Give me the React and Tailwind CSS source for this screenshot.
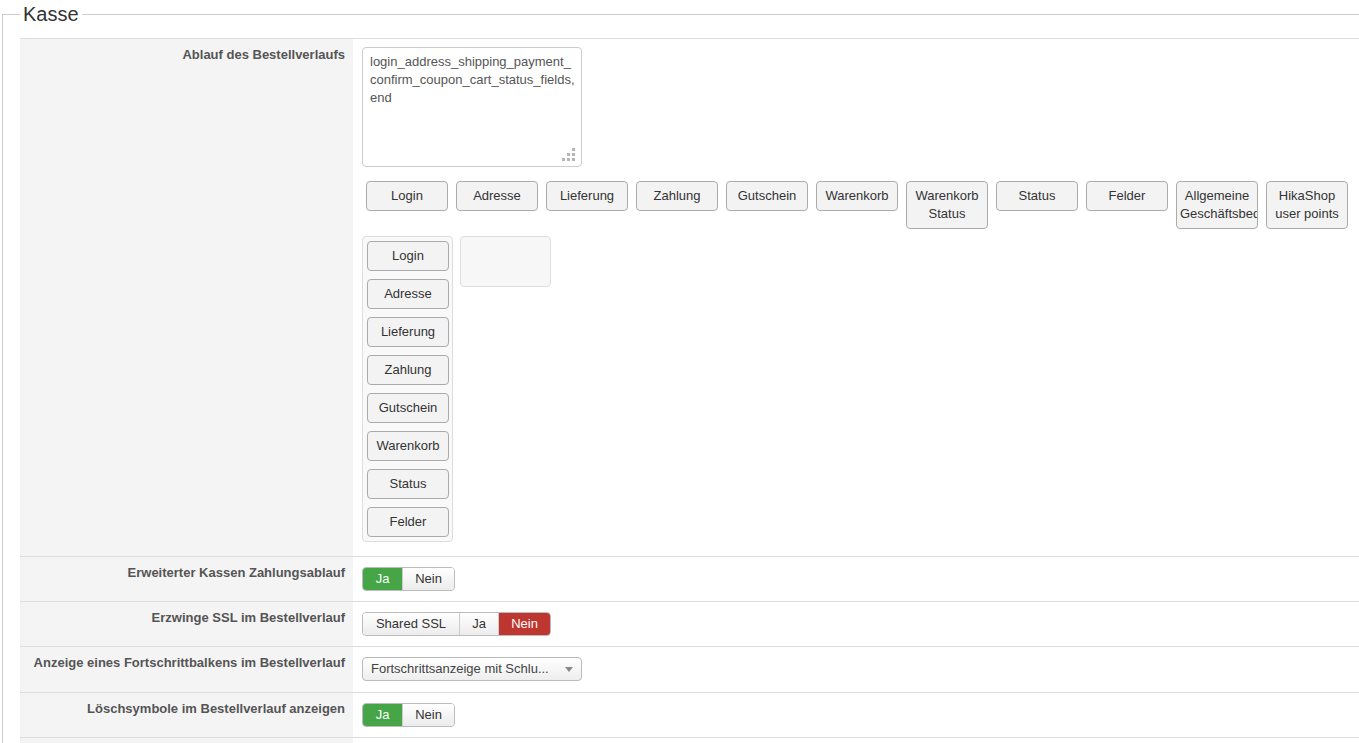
import React from "react";

const steps = ["Login", "Adresse", "Lieferung", "Zahlung", "Gutschein", "Warenkorb", "Warenkorb Status", "Status", "Felder", "Allgemeine Geschäftsbedingungen", "HikaShop user points"];
const chosen = ["Login", "Adresse", "Lieferung", "Zahlung", "Gutschein", "Warenkorb", "Status", "Felder"];

const StepButton = ({ label }) => (
  <div className="w-[82px] shrink-0 overflow-hidden rounded-[4px] border border-[#aaa] bg-[#f3f3f3] px-[3px] py-[5px] text-center text-[13px] leading-[18px] text-[#333]">
    {label}
  </div>
);

const Toggle = ({ options }) => (
  <div className="inline-flex h-[24px] overflow-hidden rounded-[4px] border border-[#bbb] text-[13px]">
    {options.map(function (o, i) {
      var cls = o.active === "green"
        ? "bg-[#46a546] text-white"
        : o.active === "red"
          ? "bg-[#bd362f] text-white"
          : "bg-gradient-to-b from-white to-[#ececec] text-[#333]";
      return (
        <div key={i} className={"flex items-center justify-center " + cls + (i > 0 ? " border-l border-[#ccc]" : "")} style={{ width: o.w }}>
          {o.label}
        </div>
      );
    })}
  </div>
);

const Row = ({ label, children }) => (
  <div className="flex border-t border-[#ddd]">
    <div className="w-[333px] shrink-0 bg-[#f4f4f4] pr-[8px] text-right text-[13px] font-bold leading-[18px] text-[#555]">
      <div className="pt-[7px]">{label}</div>
    </div>
    <div className="flex-1 pl-[9px]">{children}</div>
  </div>
);

// resize grip drawn over the textarea corner
const Grip = () => (
  <svg className="absolute bottom-[6px] right-[7px]" width="13" height="13" viewBox="0 0 13 13">
    <g fill="#b5b5b5">
      <rect x="10" y="0" width="3" height="3" />
      <rect x="5" y="5" width="3" height="3" />
      <rect x="10" y="5" width="3" height="3" />
      <rect x="0" y="10" width="3" height="3" />
      <rect x="5" y="10" width="3" height="3" />
      <rect x="10" y="10" width="3" height="3" />
    </g>
  </svg>
);

export default function App() {
  return (
    <div className="h-[743px] overflow-hidden bg-white" style={{ fontFamily: '"Liberation Sans", Arial, sans-serif' }}>
      <fieldset className="ml-[2px] border-l border-t border-[#ccc] pl-[17px]">
        <legend className="px-[3px] text-[20px] leading-[28px] text-[#333]">Kasse</legend>
        <div className="mt-[10px]">
          <Row label="Ablauf des Bestellverlaufs">
            <div className="pt-[8px] pb-[14px]">
              <div className="relative w-[220px]">
                <textarea
                  readOnly
                  className="block h-[120px] w-[220px] resize-none overflow-hidden rounded-[4px] border border-[#ccc] pl-[7px] pr-[1px] py-[5px] text-[13px] leading-[18px] text-[#555] outline-none"
                  defaultValue={"login_address_shipping_payment_\nconfirm_coupon_cart_status_fields,\nend"}
                />
                <Grip />
              </div>
              <div className="mt-[14px] flex items-start gap-[8px] pl-[4px]">
                {steps.map(function (s) { return <StepButton key={s} label={s} />; })}
              </div>
              <div className="mt-[7px] flex items-start gap-[7px]">
                <div className="flex w-[91px] flex-col gap-[8px] rounded-[4px] border border-[#ddd] bg-[#f9f9f9] p-[4px]">
                  {chosen.map(function (s) { return <StepButton key={s} label={s} />; })}
                </div>
                <div className="h-[51px] w-[91px] rounded-[4px] border border-[#ddd] bg-[#f7f7f7]" />
              </div>
            </div>
          </Row>
          <Row label="Erweiterter Kassen Zahlungsablauf">
            <div className="flex py-[10px]">
              <Toggle options={[{ label: "Ja", w: 39, active: "green" }, { label: "Nein", w: 52 }]} />
            </div>
          </Row>
          <Row label="Erzwinge SSL im Bestellverlauf">
            <div className="flex py-[10px]">
              <Toggle options={[{ label: "Shared SSL", w: 96 }, { label: "Ja", w: 39 }, { label: "Nein", w: 52, active: "red" }]} />
            </div>
          </Row>
          <Row label="Anzeige eines Fortschrittbalkens im Bestellverlauf">
            <div className="flex pt-[10px] pb-[11px]">
              <div className="flex h-[24px] w-[220px] items-center justify-between rounded-[4px] border border-[#bbb] bg-gradient-to-b from-white to-[#eee] pl-[8px] pr-[8px] text-[13px] text-[#444]">
                <span>Fortschrittsanzeige mit Schlu...</span>
                <svg width="8" height="5" viewBox="0 0 8 5"><path d="M0 0h8L4 5z" fill="#888" /></svg>
              </div>
            </div>
          </Row>
          <Row label="Löschsymbole im Bestellverlauf anzeigen">
            <div className="flex py-[10px]">
              <Toggle options={[{ label: "Ja", w: 39, active: "green" }, { label: "Nein", w: 52 }]} />
            </div>
          </Row>
          <Row label="">
            <div className="h-[45px]" />
          </Row>
        </div>
      </fieldset>
    </div>
  );
}
